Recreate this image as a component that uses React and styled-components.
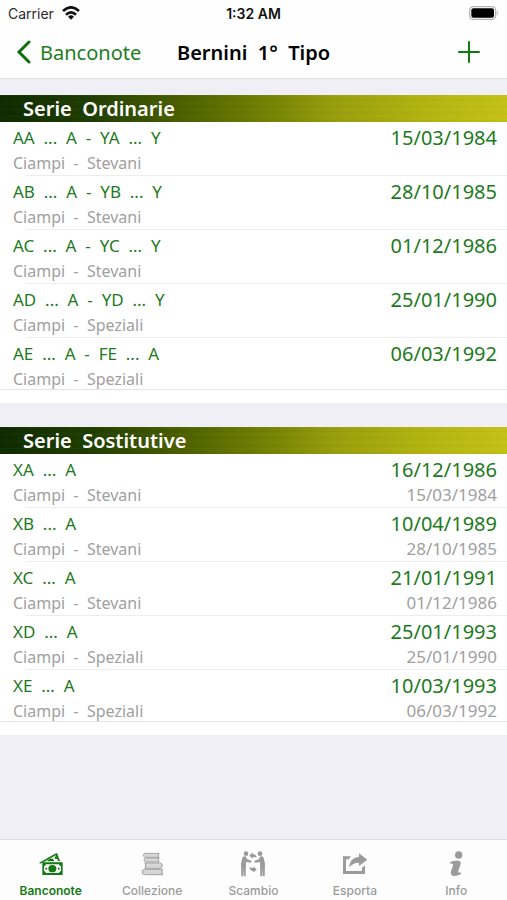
import React from 'react';
import styled, { createGlobalStyle } from 'styled-components';

const GlobalStyle = createGlobalStyle`
  * {
    box-sizing: border-box;
  }
  body {
    margin: 0;
    background-color: #f0eff5;
    font-family: "Noto Sans", "Open Sans", sans-serif;
  }
`;

const Screen = styled.div`
  display: flex;
  flex-direction: column;
  min-height: 100vh;
`;

const Header = styled.header`
  background-color: #fefefe;
  border-bottom: 1px solid #e2e2e4;
`;

const StatusBar = styled.div`
  display: grid;
  grid-template-columns: 1fr auto 1fr;
  align-items: center;
  height: 26px;
  padding: 0 8px;
  font-family: Inter, sans-serif;
  font-size: 14px;
  color: #2b2b2b;
`;

const Carrier = styled.span`
  display: flex;
  align-items: center;
  gap: 8px;
`;

const Clock = styled.time`
  font-weight: 600;
  color: #111;
`;

const Battery = styled.svg`
  justify-self: end;
`;

const NavBar = styled.nav`
  display: grid;
  grid-template-columns: 1fr auto 1fr;
  align-items: center;
  height: 52px;
  padding: 0 16px;
`;

const BackLink = styled.a`
  display: flex;
  align-items: center;
  gap: 9px;
  font-size: 20px;
  color: #1d7d1d;
  text-decoration: none;
`;

const Title = styled.h1`
  margin: 0;
  font-size: 20px;
  font-weight: 600;
  white-space: pre;
  color: #000;
`;

const AddButton = styled.button`
  justify-self: end;
  display: flex;
  padding: 0 11px;
  border: none;
  background: none;
  cursor: pointer;
`;

const Main = styled.main`
  display: flex;
  flex-direction: column;
  flex: 1;
  gap: 24px;
  padding: 16px 0 24px;
`;

const Section = styled.section`
  padding-bottom: 13px;
  background-color: #fff;
`;

const SectionTitle = styled.h2`
  margin: 0;
  padding: 0 23px;
  font-size: 20px;
  font-weight: 600;
  line-height: 27px;
  white-space: pre;
  color: #fff;
  background:
    repeating-linear-gradient(
      to bottom,
      rgba(255, 255, 160, 0.03) 0 1px,
      transparent 1px 4px,
      rgba(0, 0, 0, 0.03) 4px 5px,
      transparent 5px 7px
    ),
    linear-gradient(
      to right,
      #0f2b00 0%,
      #1f3e00 18%,
      #4a5e00 35%,
      #6c7c02 50%,
      #989e0c 66%,
      #b0b210 82%,
      #c4c218 100%
    );
`;

const List = styled.ul`
  margin: 0;
  padding: 0;
  list-style: none;
`;

const Row = styled.li`
  display: grid;
  grid-template-columns: 1fr auto;
  align-content: start;
  column-gap: 12px;
  height: 54px;
  padding: 3px 10px 0 13px;
  white-space: pre;
  background: linear-gradient(#ededee, #ededee) 26px 100% / 100% 1px no-repeat;
  &:last-child {
    height: 52px;
    background: none;
    border-bottom: 1px solid #e4e4e6;
  }
`;

const Series = styled.span`
  font-size: 17px;
  line-height: 26px;
  color: #1d7a1d;
`;

const IssueDate = styled.time`
  font-size: 20px;
  line-height: 26px;
  text-align: right;
  color: #1d7a1d;
`;

const Signatures = styled.span`
  font-size: 16px;
  line-height: 24px;
  color: #a0a0a0;
`;

const DecreeDate = styled.time`
  font-size: 17px;
  line-height: 24px;
  text-align: right;
  color: #a0a0a0;
`;

const TabBar = styled.nav`
  display: grid;
  grid-template-columns: repeat(5, 1fr);
  height: 61px;
  border-top: 1px solid #dddde0;
  background-color: #fdfdfd;
`;

const Tab = styled.a`
  display: flex;
  flex-direction: column;
  align-items: center;
  gap: 6px;
  padding-top: 11px;
  font-family: Inter, sans-serif;
  font-size: 12px;
  font-weight: ${props => (props.$active ? 600 : 500)};
  line-height: 16px;
  text-decoration: none;
  color: ${props => (props.$active ? '#157a15' : '#9b9b9b')};
`;

const WifiIcon = () => (
  <svg width="18" height="14" viewBox="0 0 54 42" fill="none" stroke="#111" strokeWidth="8">
    <path d="M3 15 Q27 -7 51 15" />
    <path d="M12 26 Q27 12 42 26" />
    <path d="M27 41 L18 32 Q27 24 36 32 Z" fill="#111" stroke="none" />
  </svg>
);

const BatteryIcon = () => (
  <Battery width="30" height="14" viewBox="0 0 90 42">
    <rect x="2" y="2" width="78" height="38" rx="11" fill="#fff" stroke="#b5b5b5" strokeWidth="4" />
    <rect x="7" y="7" width="68" height="28" rx="6" fill="#000" />
    <path d="M84 14 Q90 21 84 28 Z" fill="#b5b5b5" />
  </Battery>
);

const BanknotesIcon = () => (
  <svg width="24" height="24" viewBox="0 0 72 72" fill="currentColor">
    <path d="M1 32 L48 5 L54 3 L63 27 H57 L50 10 L14 31 L3 35 Z" />
    <path d="M25 26 Q33 17 42 20 L46 28 H25 Z" />
    <circle cx="51" cy="17" r="4" />
    <path
      fillRule="evenodd"
      d="M10 31 H71 V69 H10 Z M21 37 Q20 42 15 43 V57 Q20 58 21 63 H60 Q61 58 66 57 V43 Q61 42 60 37 Z"
    />
    <ellipse cx="40" cy="50" rx="12" ry="11" />
    <circle cx="22" cy="50" r="3" />
    <circle cx="59" cy="50" r="3" />
  </svg>
);

const BooksIcon = () => (
  <svg width="24" height="24" viewBox="0 0 72 72" fill="#d6d6d6" stroke="#a4a4a4" strokeWidth="3">
    <path d="M58 4 H16 Q10 5 10 10 Q10 15 16 16 H58 M55 4 V16" />
    <path d="M58 18 H18 Q12 19 12 24 Q12 29 18 30 H58 M55 18 V30" />
    <path d="M14 33 H60 Q67 34 67 41 Q67 48 60 49 H14 M17 33 V49" />
    <path d="M69 52 H14 Q6 53 6 60 Q6 67 14 68 H69 M66 52 V68" />
  </svg>
);

const ExchangeIcon = () => (
  <svg width="26" height="26" viewBox="0 0 78 78" fill="currentColor">
    <circle cx="18" cy="8" r="7" />
    <circle cx="60" cy="8" r="7" />
    <path d="M7 20 Q10 15 17 16 L22 25 L34 29 Q36 33 32 35 L18 33 L17 76 H11 L10 50 L9 76 H4 L3 38 Z" />
    <path d="M71 20 Q68 15 61 16 L56 25 L44 29 Q42 33 46 35 L60 33 L61 76 H67 L68 50 L69 76 H74 L75 38 Z" />
    <path d="M28 14 L37 4 V8 Q48 9 50 20 Q43 17 38 18 V23 Z" />
    <path d="M50 55 L41 65 V61 Q30 60 28 48 Q35 52 40 51 V46 Z" />
  </svg>
);

const ShareIcon = () => (
  <svg width="26" height="24" viewBox="0 0 78 72" fill="currentColor">
    <path d="M3 13 H27 L20 22 H12 V57 H60 V48 L69 40 V66 H3 Z" />
    <path d="M51 4 L76 23 L51 42 V32 Q34 31 21 46 Q25 16 51 14 Z" />
  </svg>
);

const InfoIcon = () => (
  <svg width="16" height="26" viewBox="0 0 48 78" fill="currentColor">
    <circle cx="32" cy="12" r="11" />
    <path d="M7 33 Q19 27 32 29 Q40 31 38 39 L31 60 Q29 67 39 64 L38 70 Q28 76 16 75 Q6 72 9 61 L15 44 Q17 36 6 38 Z" />
  </svg>
);

const IconBox = styled.span`
  display: flex;
  align-items: center;
  justify-content: center;
  height: 26px;
`;

const sections = [
  {
    title: 'Serie  Ordinarie',
    rows: [
      { series: 'AA  ...  A  -  YA  ...  Y', date: '15/03/1984', signatures: 'Ciampi  -  Stevani' },
      { series: 'AB  ...  A  -  YB  ...  Y', date: '28/10/1985', signatures: 'Ciampi  -  Stevani' },
      { series: 'AC  ...  A  -  YC  ...  Y', date: '01/12/1986', signatures: 'Ciampi  -  Stevani' },
      { series: 'AD  ...  A  -  YD  ...  Y', date: '25/01/1990', signatures: 'Ciampi  -  Speziali' },
      { series: 'AE  ...  A  -  FE  ...  A', date: '06/03/1992', signatures: 'Ciampi  -  Speziali' },
    ],
  },
  {
    title: 'Serie  Sostitutive',
    rows: [
      { series: 'XA  ...  A', date: '16/12/1986', signatures: 'Ciampi  -  Stevani', decree: '15/03/1984' },
      { series: 'XB  ...  A', date: '10/04/1989', signatures: 'Ciampi  -  Stevani', decree: '28/10/1985' },
      { series: 'XC  ...  A', date: '21/01/1991', signatures: 'Ciampi  -  Stevani', decree: '01/12/1986' },
      { series: 'XD  ...  A', date: '25/01/1993', signatures: 'Ciampi  -  Speziali', decree: '25/01/1990' },
      { series: 'XE  ...  A', date: '10/03/1993', signatures: 'Ciampi  -  Speziali', decree: '06/03/1992' },
    ],
  },
];

const tabs = [
  { label: 'Banconote', Icon: BanknotesIcon, active: true },
  { label: 'Collezione', Icon: BooksIcon },
  { label: 'Scambio', Icon: ExchangeIcon },
  { label: 'Esporta', Icon: ShareIcon },
  { label: 'Info', Icon: InfoIcon },
];

const App = () => (
  <Screen>
    <GlobalStyle />
    <Header>
      <StatusBar>
        <Carrier>
          Carrier
          <WifiIcon />
        </Carrier>
        <Clock>1:32 AM</Clock>
        <BatteryIcon />
      </StatusBar>
      <NavBar>
        <BackLink href="#banconote">
          <svg width="15" height="24" viewBox="0 0 15 24" fill="none" stroke="#0f6f0f" strokeWidth="3">
            <path d="M13 2 L3 12 L13 22" strokeLinecap="round" />
          </svg>
          Banconote
        </BackLink>
        <Title>{'Bernini  1°  Tipo'}</Title>
        <AddButton type="button" aria-label="Aggiungi">
          <svg width="22" height="22" viewBox="0 0 22 22" stroke="#0f7a0f" strokeWidth="2">
            <path d="M11 1 V21 M1 11 H21" strokeLinecap="round" />
          </svg>
        </AddButton>
      </NavBar>
    </Header>
    <Main>
      {sections.map(section => (
        <Section key={section.title}>
          <SectionTitle>{section.title}</SectionTitle>
          <List>
            {section.rows.map(row => (
              <Row key={row.series}>
                <Series>{row.series}</Series>
                <IssueDate>{row.date}</IssueDate>
                <Signatures>{row.signatures}</Signatures>
                {row.decree && <DecreeDate>{row.decree}</DecreeDate>}
              </Row>
            ))}
          </List>
        </Section>
      ))}
    </Main>
    <TabBar>
      {tabs.map(({ label, Icon, active }) => (
        <Tab key={label} href={`#${label.toLowerCase()}`} $active={active}>
          <IconBox>
            <Icon />
          </IconBox>
          {label}
        </Tab>
      ))}
    </TabBar>
  </Screen>
);

export default App;
